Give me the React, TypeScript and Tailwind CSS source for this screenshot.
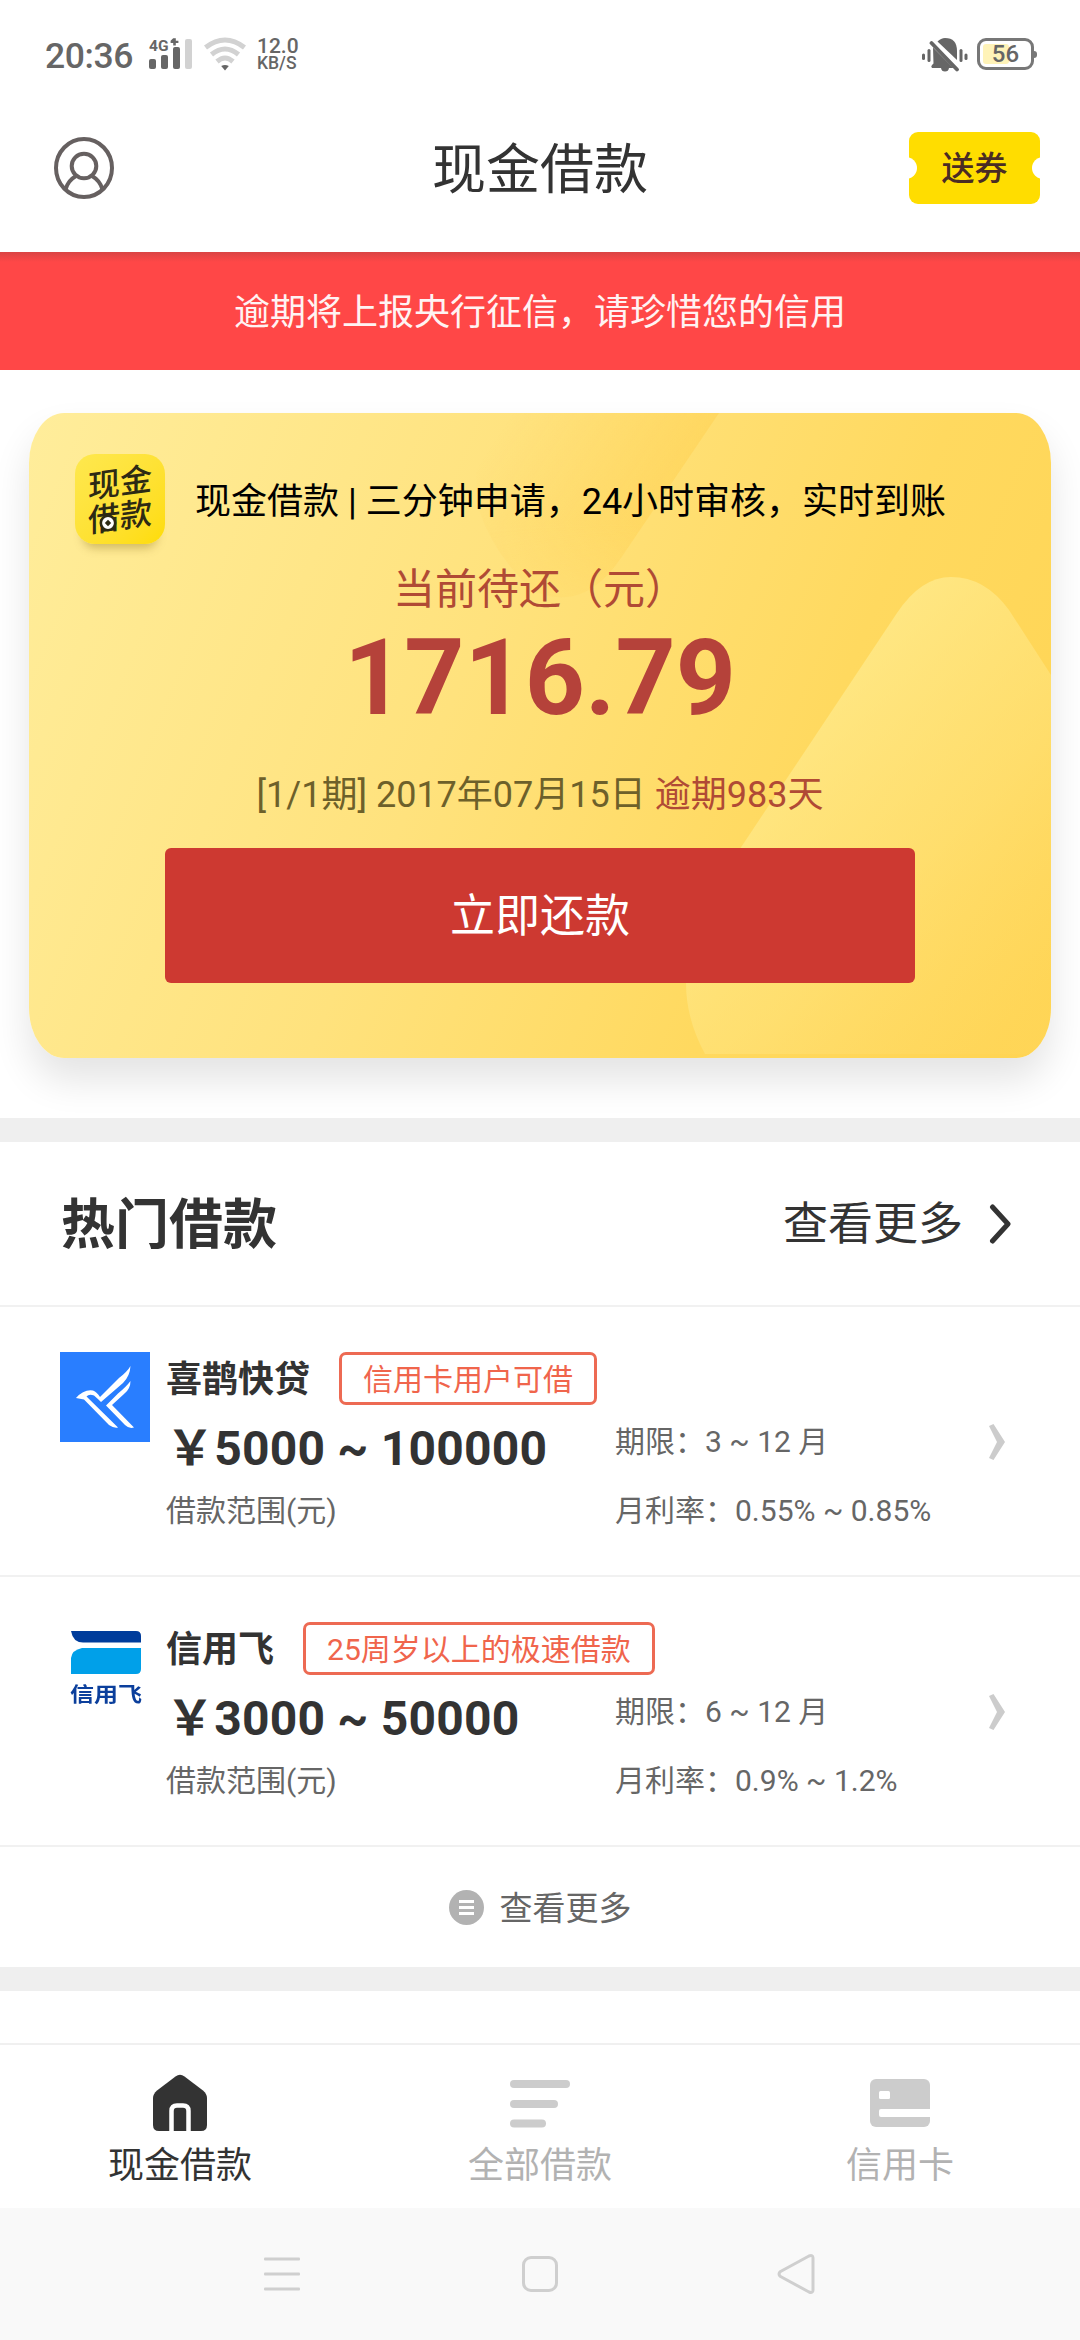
import type { ReactNode } from 'react';

type Loan = {
  name: string;
  tag: string;
  range: string;
  term: string;
  rate: string;
  logo: ReactNode;
};

function StatusBar() {
  return (
    <div className="flex h-[84px] shrink-0 items-start justify-between pt-[37px] pr-[43px] pl-[45px] text-[#666]">
      <div className="flex items-start">
        <span className="w-[91px] pt-px text-[35.500px] leading-[36px] font-medium tracking-[-0.4px] whitespace-nowrap">20:36</span>
        <div className="relative ml-[13px] h-[34px] w-[44px]">
          <svg width="44" height="34" viewBox="0 0 44 34" className="block">
            <g fill="#666">
              <rect x="0" y="22" width="7" height="10" rx="2" />
              <rect x="12" y="18" width="7" height="14" rx="2" />
              <rect x="24" y="10" width="7" height="22" rx="2" />
              <path d="M24.200 1.200h2.600v2.600h2.600v2.200h-2.600v2.600h-2.600V6h-2.600V3.800z" />
            </g>
            <rect x="36" y="2" width="7" height="30" rx="2" fill="#d2d2d2" />
          </svg>
          <span className="absolute top-[1px] left-0 text-[15.500px] leading-[16px] font-bold">4G</span>
        </div>
        <svg width="42" height="34" viewBox="0 0 42 34" className="ml-[11px] block" fill="none" stroke="#d2d2d2" strokeWidth="5">
          <path d="M1.500 10.500Q21 -4.500 40.500 10.500" />
          <path d="M7.500 17.500Q21 6.500 34.500 17.500" />
          <path d="M13 24.500Q21 17.500 29 24.500" />
          <path d="M17.200 29Q21 26.800 24.800 29L21 33.500z" fill="#666" stroke="none" />
        </svg>
        <div className="ml-[11px] flex flex-col font-medium">
          <span className="text-[21px] leading-[18px]">12.0</span>
          <span className="text-[17.500px] leading-[16px]">KB/S</span>
        </div>
      </div>
      <div className="flex items-start gap-[9px]">
        <svg width="46" height="35" viewBox="0 0 46 35" fill="#666">
          <rect x="0" y="16.500" width="3" height="6.500" rx="1.500" />
          <rect x="5.500" y="12" width="3" height="13" rx="1.500" />
          <rect x="37.500" y="12" width="3" height="13" rx="1.500" />
          <rect x="42.500" y="16.500" width="3" height="6.500" rx="1.500" />
          <path d="M15.500 4.500Q19 1 23 1Q35 1 35 14V23Z" />
          <path d="M11 10.500L31.500 31H27Q26.500 34.500 23 34.500Q19.500 34.500 19 31H10Q8.500 29.500 10 28L11.500 26.500Z" />
          <path d="M9.500 6L35 32.500" stroke="#666" strokeWidth="3.800" strokeLinecap="round" />
        </svg>
        <div className="flex items-center pt-px">
          <div className="relative flex h-[32px] w-[57px] items-center justify-center rounded-[9px] border-[3px] border-[#777]">
            <span className="absolute top-[3px] left-[3px] h-[20px] w-[26px] rounded-[3px] bg-[#fff3b8]" />
            <span className="relative text-[24px] leading-[26px] font-medium">56</span>
          </div>
          <span className="h-[7px] w-[3px] rounded-r-[3px] bg-[#777]" />
        </div>
      </div>
    </div>
  );
}

function Header() {
  return (
    <header className="grid h-[168px] shrink-0 grid-cols-3 items-center pr-[40px] pl-[54px]">
      <svg width="60" height="62" viewBox="0 0 60 62" fill="none" stroke="#666060" strokeWidth="4">
        <ellipse cx="30" cy="31" rx="28" ry="29" />
        <circle cx="30" cy="29" r="12.300" />
        <path d="M11.500 52.500Q14 43.500 22 39M48.500 52.500Q46 43.500 38 39" />
      </svg>
      <h1 className="-ml-[14px] pt-[5px] text-center text-[54px] leading-[60px] whitespace-nowrap text-[#333]">现金借款</h1>
      <button className="relative flex h-[72px] w-[131px] items-center justify-center justify-self-end overflow-hidden rounded-[9px] bg-[#fd0]">
        <span className="absolute top-[25px] -left-[14px] size-[22px] rounded-full bg-white" />
        <span className="pt-[2px] text-[33px] leading-[40px] font-medium text-[#4a2c24]">送券</span>
        <span className="absolute top-[25px] -right-[14px] size-[22px] rounded-full bg-white" />
      </button>
    </header>
  );
}

function AppLogo() {
  return (
    <div className="relative flex size-[90px] shrink-0 items-center justify-center rounded-[20px] bg-gradient-to-br from-[#fee84e] to-[#fedc00] shadow-[0_12px_10px_-8px_rgba(120,95,10,0.35)]">
      <div className="flex -skew-y-8 flex-col pt-[2px] text-[32px] leading-[34px] font-medium text-[#2d2a14]">
        <span>现金</span>
        <span>借款</span>
      </div>
      <svg width="18" height="18" viewBox="0 0 18 18" className="absolute top-[60px] left-[24px]">
        <circle cx="9" cy="9" r="7.200" fill="#fff" stroke="#2d2a14" strokeWidth="2.600" />
        <path d="M9 5.800L12.200 9L9 12.200L5.800 9z" fill="#2d2a14" />
      </svg>
    </div>
  );
}

function CardBackdrop() {
  return (
    <svg width="1022" height="645" viewBox="0 0 1022 645" className="absolute inset-0">
      <defs>
        <linearGradient id="strip" x1="0.050" y1="0.200" x2="0.850" y2="0.600">
          <stop offset="0" stopColor="#ffc93f" stopOpacity="0" />
          <stop offset="1" stopColor="#ffc93f" stopOpacity="0.380" />
        </linearGradient>
        <linearGradient id="stripFade" x1="0" y1="0" x2="0" y2="1">
          <stop offset="0" stopColor="#fff" />
          <stop offset="0.550" stopColor="#fff" />
          <stop offset="1" stopColor="#333" />
        </linearGradient>
        <mask id="stripMask">
          <rect x="430" width="270" height="200" fill="url(#stripFade)" />
        </mask>
        <linearGradient id="hill" x1="0.300" y1="0.200" x2="0.900" y2="0.950">
          <stop offset="0" stopColor="#fff2a0" stopOpacity="0.600" />
          <stop offset="0.550" stopColor="#ffe98c" stopOpacity="0.380" />
          <stop offset="1" stopColor="#ffdc70" stopOpacity="0.120" />
        </linearGradient>
      </defs>
      <path d="M460 0H690L592 145Q555 200 505 178Q462 140 448 90Q444 40 460 0z" fill="url(#strip)" mask="url(#stripMask)" />
      <path d="M868 200Q892 164 922 164Q956 164 980 197L1022 262V641H676Q657 606 657 570Q657 525 683 478z" fill="url(#hill)" />
    </svg>
  );
}

function RepaymentCard() {
  return (
    <section className="flex h-[748px] shrink-0 flex-col overflow-hidden px-[29px] pt-[43px]">
      <div className="relative flex h-[645px] flex-col items-center rounded-[35px/50px] bg-[linear-gradient(112deg,#ffed9b_0%,#ffe27d_42%,#ffd95f_72%,#ffd452_100%)] shadow-[0_22px_38px_rgba(0,0,0,0.11)]">
        <div className="absolute inset-0 overflow-hidden rounded-[35px/50px]">
          <CardBackdrop />
        </div>
        <div className="relative mt-[41px] flex w-full items-center pl-[46px]">
          <AppLogo />
          <p className="ml-[30px] pt-[5px] text-[36px] leading-[44px] whitespace-nowrap text-black">
            现金借款 | 三分钟申请，24小时审核，实时到账
          </p>
        </div>
        <p className="relative mt-[20px] text-[42px] leading-[52px] text-[#b04a35]">当前待还（元）</p>
        <p className="relative mt-[3px] text-[105px] leading-[120px] font-bold text-[#b5423a]">1716.79</p>
        <p className="relative mt-[34px] text-[36px] leading-[44px] whitespace-nowrap text-[#6d602a]">
          [1/1期] 2017年07月15日 <span className="text-[#b04a35]">逾期983天</span>
        </p>
        <button className="relative mt-[31px] flex h-[135px] w-[750px] items-center justify-center rounded-[6px] bg-[#cd3931] pt-[3px] text-[45px] leading-[56px] text-white">
          立即还款
        </button>
      </div>
    </section>
  );
}

function BirdLogo() {
  return (
    <svg width="90" height="90" viewBox="0 0 90 90" className="block bg-[#297eff]">
      <g fill="#fff">
        <path d="M16 46Q24 37 33 38.500Q37 40 40 45L59 26Q67 20 70.500 14Q70 24 63 31L41 50Q38 47 34 43.500Q29 41.500 26.500 44.500L58 75.500Q54 76.500 49 73L24 47.500z" />
        <path d="M70.500 29Q70.500 37 64 42L52 53L74 75.500Q69 77 65 73L46 53.500L58 41.500Q66 35 70.500 29z" />
      </g>
    </svg>
  );
}

function FlyLogo() {
  return (
    <div className="flex size-[90px] flex-col items-center pt-[9px] pl-[2px]">
      <svg width="70" height="43" viewBox="0 0 70 43" className="block">
        <path d="M0 0H65Q70 0 70 5V11.500H12Q2 11.500 0 0z" fill="#003c9b" />
        <path d="M11 17H70V38Q70 43 65 43H0V27Q1 19 11 17z" fill="#00a0e9" />
      </svg>
      <span className="mt-[9px] scale-y-85 text-[24px] leading-[24px] font-bold whitespace-nowrap text-[#0b3f9c]">信用飞</span>
    </div>
  );
}

const loans: Loan[] = [
  {
    name: '喜鹊快贷',
    tag: '信用卡用户可借',
    range: '￥5000 ~ 100000',
    term: '3 ~ 12 月',
    rate: '0.55% ~ 0.85%',
    logo: <BirdLogo />,
  },
  {
    name: '信用飞',
    tag: '25周岁以上的极速借款',
    range: '￥3000 ~ 50000',
    term: '6 ~ 12 月',
    rate: '0.9% ~ 1.2%',
    logo: <FlyLogo />,
  },
];

function LoanRow({ loan }: { loan: Loan }) {
  return (
    <article className="flex h-[270px] shrink-0 items-start border-b-2 border-[#f1f1f1] pt-[45px] pr-[75px] pl-[60px]">
      {loan.logo}
      <div className="ml-[16px] w-[449px] shrink-0">
        <div className="flex h-[53px] items-center whitespace-nowrap">
          <span className="pt-[4px] text-[36px] leading-[49px] font-bold text-[#333]">{loan.name}</span>
          <span className="ml-[29px] flex h-[53px] items-center rounded-[7px] border-[3px] border-[#ed6a53] px-[21px] pt-[2px] text-[30px] leading-[40px] text-[#f0654c]">
            {loan.tag}
          </span>
        </div>
        <p className="mt-[14px] text-[48px] leading-[60px] font-bold tracking-[0.2px] whitespace-nowrap text-[#333]">{loan.range}</p>
        <p className="mt-[12px] text-[30px] leading-[40px] text-[#666]">借款范围(元)</p>
      </div>
      <div className="mt-[70px] flex flex-1 flex-col gap-[29px] text-[30px] leading-[40px] whitespace-nowrap text-[#666]">
        <p>期限：{loan.term}</p>
        <p>月利率：{loan.rate}</p>
      </div>
      <svg width="16" height="36" viewBox="0 0 16 36" className="mt-[72px] block" fill="#ccc">
        <path d="M0 2L4.500 0L16 18L4.500 36L0 34L8 18z" />
      </svg>
    </article>
  );
}

function TabBar() {
  return (
    <nav className="mt-auto grid h-[165px] shrink-0 grid-cols-3 border-t-2 border-[#f0f0f0] text-[36px] leading-[44px]">
      <div className="flex flex-col items-center pt-[29px] text-[#333]">
        <svg width="54" height="58" viewBox="0 0 54 58" className="block" fill="#333">
          <path d="M22.500 2.500Q27 -0.800 31.500 2.500L50 16.500Q54 20 54 24V51Q54 57 48 57H6Q0 57 0 51V24Q0 20 4 16.500z" />
          <path d="M18.500 57V37Q18.500 31.500 24 31.500H30Q35.500 31.500 35.500 37V57" fill="none" stroke="#fff" strokeWidth="4.500" />
        </svg>
        <span className="mt-[12px]">现金借款</span>
      </div>
      <div className="flex flex-col items-center pt-[35px] text-[#b2b2b2]">
        <svg width="60" height="48" viewBox="0 0 60 48" className="block" fill="#ccc">
          <rect width="60" height="8" rx="4" />
          <rect y="20" width="48" height="8" rx="4" />
          <rect y="39.500" width="36" height="8" rx="4" />
        </svg>
        <span className="mt-[16px]">全部借款</span>
      </div>
      <div className="flex flex-col items-center pt-[34px] text-[#b2b2b2]">
        <svg width="60" height="48" viewBox="0 0 60 48" className="block">
          <rect width="60" height="48" rx="6" fill="#ccc" />
          <rect x="9" y="12" width="11" height="8" rx="1.500" fill="#fff" />
          <path d="M11 30H60V38H11Q9 38 9 36V32Q9 30 11 30z" fill="#fff" />
        </svg>
        <span className="mt-[17px]">信用卡</span>
      </div>
    </nav>
  );
}

function SystemNav() {
  return (
    <div className="flex h-[132px] shrink-0 items-center justify-between bg-[#f9f9f9] pr-[265px] pl-[264px]">
      <svg width="36" height="40" viewBox="0 0 36 40" fill="#cfcfcf">
        <rect y="3.500" width="36" height="3" rx="1" />
        <rect y="18.500" width="36" height="3" rx="1" />
        <rect y="33.500" width="36" height="3" rx="1" />
      </svg>
      <div className="ml-[3px] size-[36px] rounded-[9px] border-[3px] border-[#cfcfcf]" />
      <svg width="38" height="42" viewBox="0 0 38 42" fill="none" stroke="#cfcfcf" strokeWidth="3" strokeLinejoin="round">
        <path d="M3.500 18.500L32 3Q36 1.500 36 5V37Q36 40.500 32 39L3.500 23.500Q0.500 21 3.500 18.500z" />
      </svg>
    </div>
  );
}

export default function App() {
  return (
    <div className="flex h-[2340px] w-[1080px] flex-col overflow-hidden bg-white font-[Roboto,'Noto_Sans_CJK_SC',sans-serif]">
      <StatusBar />
      <Header />
      <div className="flex h-[118px] shrink-0 items-center justify-center bg-[#ff4747] bg-[linear-gradient(180deg,rgba(120,60,60,0.28)_0px,rgba(120,60,60,0)_10px)] pt-[3px] text-[36px] leading-[44px] text-[#fff3f3]">
        逾期将上报央行征信，请珍惜您的信用
      </div>
      <RepaymentCard />
      <div className="h-[24px] shrink-0 bg-[#efefef]" />
      <div className="flex h-[165px] shrink-0 items-center justify-between border-b-2 border-[#f1f1f1] pr-[69px] pl-[61px] text-[#333]">
        <h2 className="pt-[5px] text-[54px] leading-[64px] font-bold">热门借款</h2>
        <div className="flex items-center">
          <span className="pt-[3px] text-[45px] leading-[56px]">查看更多</span>
          <svg width="22" height="40" viewBox="0 0 22 40" className="ml-[26px] block" fill="none" stroke="#333" strokeWidth="5" strokeLinecap="round" strokeLinejoin="round">
            <path d="M3.500 3L19 20L3.500 37" />
          </svg>
        </div>
      </div>
      {loans.map((loan) => (
        <LoanRow key={loan.name} loan={loan} />
      ))}
      <div className="flex h-[120px] shrink-0 items-center justify-center gap-[16px] text-[33px] leading-[40px] text-[#666]">
        <svg width="35" height="35" viewBox="0 0 35 35" className="block">
          <circle cx="17.500" cy="17.500" r="17.500" fill="#b2b2b2" />
          <path d="M10 11.500H25M10 17.500H25M10 23.500H25" stroke="#fff" strokeWidth="2.800" />
        </svg>
        <span className="pt-[3px]">查看更多</span>
      </div>
      <div className="h-[24px] shrink-0 bg-[#efefef]" />
      <TabBar />
      <SystemNav />
    </div>
  );
}
